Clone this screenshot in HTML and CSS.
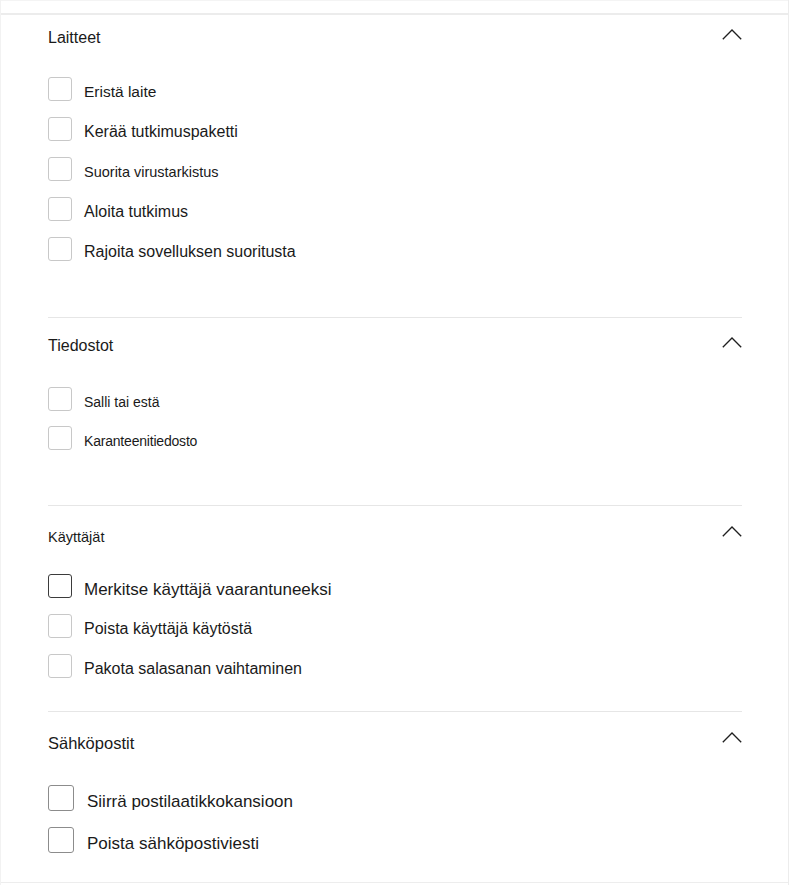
FILE: index.html
```html
<!DOCTYPE html>
<html lang="fi">
<head>
<meta charset="utf-8">
<title>Toiminnot</title>
<link rel="stylesheet" href="styles.css">
</head>
<body>
<div class="panel">
  <div class="topstrip"></div>
  <div class="content">
    <section class="group g1">
      <div class="group-head">
        <span class="title t16">Laitteet</span>
        <svg class="chev" width="20" height="11" viewBox="0 0 20 11"><polyline points="0.8,10.2 10,1 19.2,10.2"/></svg>
      </div>
      <ul class="list">
        <li class="item"><span class="box"></span><span class="label s155">Eristä laite</span></li>
        <li class="item"><span class="box"></span><span class="label s16">Kerää tutkimuspaketti</span></li>
        <li class="item"><span class="box"></span><span class="label s145">Suorita virustarkistus</span></li>
        <li class="item"><span class="box"></span><span class="label s16">Aloita tutkimus</span></li>
        <li class="item"><span class="box"></span><span class="label s16">Rajoita sovelluksen suoritusta</span></li>
      </ul>
    </section>
    <section class="group g2">
      <div class="group-head">
        <span class="title t16">Tiedostot</span>
        <svg class="chev" width="20" height="11" viewBox="0 0 20 11"><polyline points="0.8,10.2 10,1 19.2,10.2"/></svg>
      </div>
      <ul class="list">
        <li class="item"><span class="box"></span><span class="label s14">Salli tai estä</span></li>
        <li class="item"><span class="box"></span><span class="label s14 tight">Karanteenitiedosto</span></li>
      </ul>
    </section>
    <section class="group g3">
      <div class="group-head">
        <span class="title t145">Käyttäjät</span>
        <svg class="chev chev-up" width="20" height="11" viewBox="0 0 20 11"><polyline points="0.8,10.2 10,1 19.2,10.2"/></svg>
      </div>
      <ul class="list">
        <li class="item"><span class="box box-dark"></span><span class="label s17">Merkitse käyttäjä vaarantuneeksi</span></li>
        <li class="item"><span class="box"></span><span class="label s16">Poista käyttäjä käytöstä</span></li>
        <li class="item"><span class="box"></span><span class="label s16">Pakota salasanan vaihtaminen</span></li>
      </ul>
    </section>
    <section class="group g4">
      <div class="group-head">
        <span class="title t165">Sähköpostit</span>
        <svg class="chev" width="20" height="11" viewBox="0 0 20 11"><polyline points="0.8,10.2 10,1 19.2,10.2"/></svg>
      </div>
      <ul class="list list-lg">
        <li class="item"><span class="box box-lg"></span><span class="label s17">Siirrä postilaatikkokansioon</span></li>
        <li class="item"><span class="box box-lg"></span><span class="label s17">Poista sähköpostiviesti</span></li>
      </ul>
    </section>
  </div>
</div>
</body>
</html>
```

FILE: styles.css
```css
html, body {
  margin: 0;
  padding: 0;
  background: #ffffff;
}

body {
  font-family: "Liberation Sans", Arial, sans-serif;
  color: #1a1a1a;
}

.panel {
  width: 789px;
  height: 885px;
  box-sizing: border-box;
  border-left: 1px solid #f2f2f2;
  border-right: 1px solid #ececec;
  display: flex;
  flex-direction: column;
}

.topstrip {
  height: 12px;
  border-top: 1px solid #f4f4f4;
}

.content {
  border-top: 2px solid #ececec;
  border-bottom: 1px solid #ededed;
  padding: 0 46px 0 47px;
}

.group {
  border-top: 1px solid #e6e6e6;
}

.g1 { border-top: 0; padding-bottom: 56px; }
.g2 { padding-top: 6px; padding-bottom: 55px; }
.g3 { padding-top: 10px; padding-bottom: 33px; }
.g4 { padding-top: 8px; padding-bottom: 29px; }

.group-head {
  height: 40px;
  display: flex;
  align-items: center;
  justify-content: space-between;
}

.g1 .group-head { height: 42px; }

.title {
  line-height: 1;
  color: #1a1a1a;
  margin-top: 3px;
}

.g4 .title { margin-top: 7px; }

.t16 { font-size: 16px; }
.t145 { font-size: 14.5px; }
.t165 { font-size: 16.5px; }

.chev {
  display: block;
  margin-bottom: 3px;
}

.chev-up { margin-bottom: 9px; }
.g4 .chev { margin-bottom: 5px; }

.chev polyline {
  fill: none;
  stroke: #1f1f1f;
  stroke-width: 1.3;
}

.list {
  list-style: none;
  margin: 0;
  padding: 0;
  display: flex;
  flex-direction: column;
  gap: 16px;
}

.g1 .list { margin-top: 20px; }
.g2 .list { margin-top: 23px; gap: 15px; }
.g3 .list { margin-top: 18px; }
.g4 .list { margin-top: 25px; }

.item {
  display: flex;
  align-items: center;
  gap: 12px;
  height: 24px;
}

.list-lg .item { height: 26px; gap: 13px; }

.box {
  width: 24px;
  height: 24px;
  box-sizing: border-box;
  border: 1px solid #c8c8c8;
  border-radius: 3px;
  flex: none;
  background: #fff;
}

.box-dark {
  border: 1.5px solid #3b3b3b;
}

.box-lg {
  width: 26px;
  height: 26px;
  border: 1.5px solid #8c8c8c;
}

.label {
  line-height: 1;
  white-space: nowrap;
  margin-top: 6px;
}

.s14 { font-size: 14px; margin-top: 5px; }
.s145 { font-size: 14.5px; }
.s155 { font-size: 15.5px; }
.s16 { font-size: 16px; }
.s17 { font-size: 17px; }

.tight { letter-spacing: -0.2px; }
```
